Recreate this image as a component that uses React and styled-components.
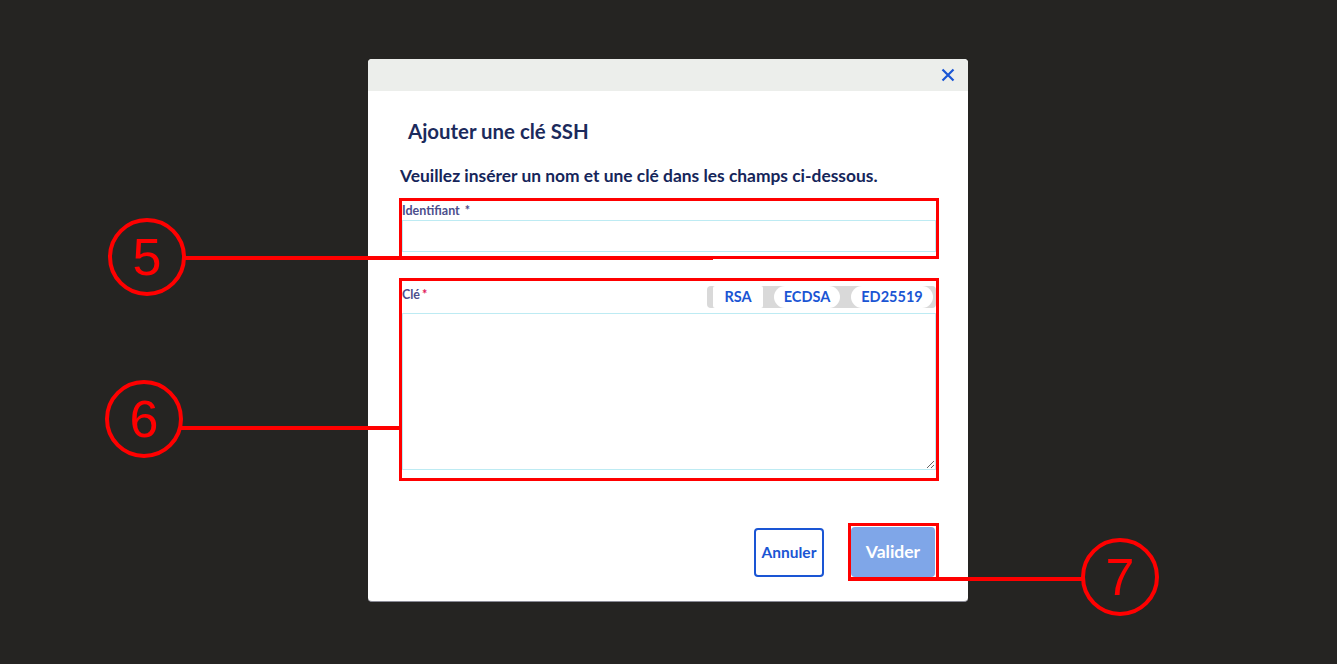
import React from 'react';
import styled, { createGlobalStyle } from 'styled-components';

const GlobalStyle = createGlobalStyle`
  html, body {
    margin: 0;
    padding: 0;
    background: #252422;
  }
  * { box-sizing: border-box; }
`;

const Page = styled.div`
  position: relative;
  width: 1337px;
  height: 664px;
  display: flex;
  align-items: center;
  justify-content: center;
  padding: 0 1px 4px 0;
  font-family: Lato, 'Noto Sans', sans-serif;
`;

const Modal = styled.div`
  width: 600px;
  background: #ffffff;
  border-radius: 4px;
  overflow: hidden;
  border-bottom: 1px solid #8a8a96;
`;

const Header = styled.div`
  height: 32px;
  background: #eceeeb;
  display: flex;
  align-items: center;
  justify-content: flex-end;
  padding-right: 12px;
`;

const CloseButton = styled.button`
  border: none;
  background: transparent;
  padding: 0;
  width: 16px;
  height: 16px;
  display: flex;
  align-items: center;
  justify-content: center;
  cursor: pointer;
`;

const Body = styled.div`
  padding: 0 29px 20px 31px;
  display: flex;
  flex-direction: column;
`;

const Title = styled.h2`
  margin: 28px 0 0 9px;
  font-size: 20.4px;
  line-height: 24px;
  font-weight: 700;
  color: #1b2a5c;
`;

const Subtitle = styled.p`
  margin: 22px 0 0 1px;
  font-size: 17.4px;
  line-height: 22px;
  font-weight: 700;
  color: #15255a;
`;

const FieldGroup = styled.div`
  margin-top: ${(p) => p.$top}px;
  border: 3px solid #ff0000;
  padding: 0 0 ${(p) => p.$bottom}px 0;
  display: flex;
  flex-direction: column;
`;

const LabelRow = styled.div`
  height: ${(p) => p.$height}px;
  display: flex;
  justify-content: space-between;
  align-items: flex-start;
  padding-top: ${(p) => p.$pad}px;
`;

const Label = styled.label`
  font-size: 12.5px;
  font-weight: 700;
  color: #4c4e8c;
  line-height: 14px;
  margin-top: ${(p) => p.$top || 0}px;
`;

const Required = styled.span`
  color: ${(p) => (p.$red ? '#e2185a' : 'inherit')};
  margin-left: ${(p) => (p.$red ? 2 : 5)}px;
`;

const TextInput = styled.input`
  height: 32px;
  border: 1px solid #bdebf3;
  outline: none;
  padding: 0 8px;
  font-family: inherit;
`;

const KeyArea = styled.textarea`
  height: 157px;
  border: 1px solid #bdebf3;
  outline: none;
  padding: 8px;
  font-family: inherit;
  resize: vertical;
`;

const Segmented = styled.div`
  display: flex;
  gap: 11px;
  background: #d9d9d9;
  border-radius: 4px;
  padding: 0 3px 0 6px;
  margin-top: 1px;
`;

const Pill = styled.span`
  height: 22px;
  width: ${(p) => p.$w}px;
  display: flex;
  align-items: center;
  justify-content: center;
  background: #ffffff;
  border-radius: ${(p) => (p.$square ? '2px' : '11px')};
  font-size: 14.5px;
  font-weight: 700;
  color: #1a55d4;
`;

const Footer = styled.div`
  margin-top: 42px;
  display: flex;
  justify-content: flex-end;
  align-items: center;
  gap: 24px;
`;

const OutlineButton = styled.button`
  width: 70px;
  height: 49px;
  border: 2px solid #1a55d4;
  border-radius: 4px;
  background: #ffffff;
  color: #1a55d4;
  font-family: inherit;
  font-size: 15.5px;
  font-weight: 700;
  padding: 0;
  margin-top: 1px;
`;

const Highlight = styled.div`
  border: 3px solid #ff0000;
  padding: 1px 1px 1px 0;
`;

const PrimaryButton = styled.button`
  width: 84px;
  height: 50px;
  border: none;
  border-radius: 4px;
  background: #7fa6e8;
  color: #ffffff;
  font-family: inherit;
  font-size: 17.5px;
  font-weight: 700;
  padding: 0;
`;

const Annotations = styled.svg`
  position: absolute;
  left: 0;
  top: 0;
  pointer-events: none;
`;

const Callout = ({ cx, cy, n }) => (
  <g>
    <circle cx={cx} cy={cy} r={37} fill="none" stroke="#ff0000" strokeWidth={4} />
    <text
      x={cx}
      y={cy + 18}
      textAnchor="middle"
      fontFamily="'Liberation Sans', Arial, sans-serif"
      fontSize={52}
      fill="#ff0000"
    >
      {n}
    </text>
  </g>
);

const App = () => {
  return (
    <Page>
      <GlobalStyle />
      <Modal>
        <Header>
          <CloseButton aria-label="Fermer">
            <svg width="14" height="14" viewBox="0 0 14 14">
              <path d="M1.5 1.5 L12.5 12.5 M12.5 1.5 L1.5 12.5" stroke="#1a55d4" strokeWidth="2.2" />
            </svg>
          </CloseButton>
        </Header>
        <Body>
          <Title>Ajouter une clé SSH</Title>
          <Subtitle>Veuillez insérer un nom et une clé dans les champs ci-dessous.</Subtitle>

          <FieldGroup $top={11} $bottom={4}>
            <LabelRow $height={19} $pad={3}>
              <Label>
                Identifiant<Required>*</Required>
              </Label>
            </LabelRow>
            <TextInput />
          </FieldGroup>

          <FieldGroup $top={19} $bottom={8}>
            <LabelRow $height={32} $pad={4}>
              <Label $top={3}>
                Clé<Required $red>*</Required>
              </Label>
              <Segmented>
                <Pill $w={50} $square>RSA</Pill>
                <Pill $w={66}>ECDSA</Pill>
                <Pill $w={82}>ED25519</Pill>
              </Segmented>
            </LabelRow>
            <KeyArea />
          </FieldGroup>

          <Footer>
            <OutlineButton>Annuler</OutlineButton>
            <Highlight>
              <PrimaryButton>Valider</PrimaryButton>
            </Highlight>
          </Footer>
        </Body>
      </Modal>

      <Annotations width="1337" height="664" viewBox="0 0 1337 664">
        <Callout cx={147} cy={257} n="5" />
        <line x1={184} y1={258} x2={713} y2={258} stroke="#ff0000" strokeWidth={4} />
        <Callout cx={144} cy={419} n="6" />
        <line x1={180} y1={428} x2={401} y2={428} stroke="#ff0000" strokeWidth={4} />
        <Callout cx={1120} cy={577} n="7" />
        <line x1={848} y1={579} x2={1083} y2={579} stroke="#ff0000" strokeWidth={4} />
      </Annotations>
    </Page>
  );
};

export default App;
